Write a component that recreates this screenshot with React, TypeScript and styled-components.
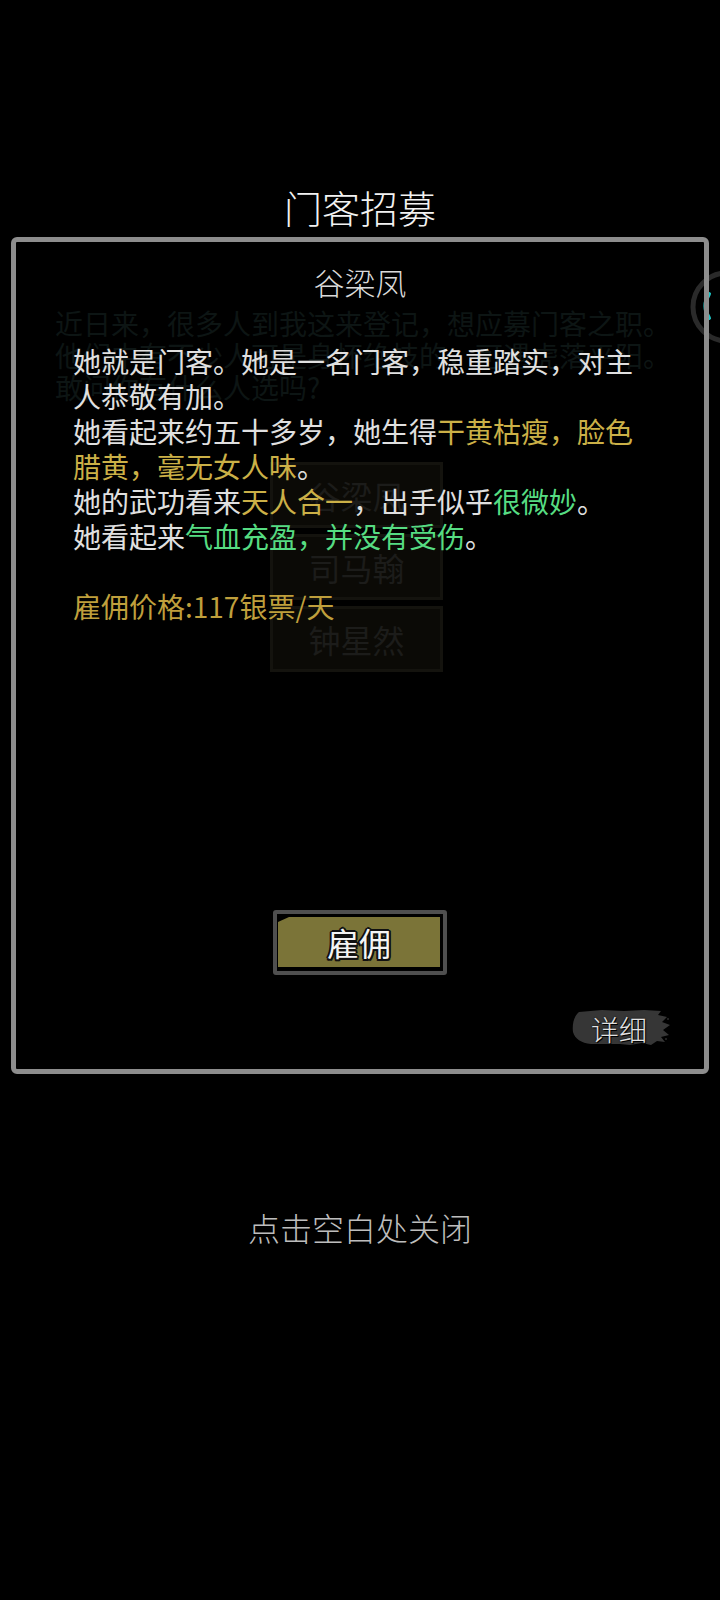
import React from 'react';
import styled, { createGlobalStyle } from 'styled-components';

const GlobalStyle = createGlobalStyle`
  html, body {
    margin: 0;
    padding: 0;
    background: #000;
  }
  body {
    font-family: "Noto Sans CJK SC", "Noto Sans", sans-serif;
  }
`;

const Screen = styled.div`
  position: relative;
  width: 720px;
  height: 1600px;
  overflow: hidden;
  background: #000;
`;

// page under the dialog, dimmed almost to black
const UnderPage = styled.div`
  display: flex;
  flex-direction: column;
  padding-top: 307px;
`;

const Intro = styled.p`
  margin: 0 0 0 55px;
  width: 620px;
  font-size: 28px;
  line-height: 32px;
  color: #0d1514;
`;

const NameList = styled.div`
  display: flex;
  flex-direction: column;
  align-items: center;
  gap: 6px;
  margin-top: 59px;
  padding-right: 7px;
`;

const NameButton = styled.div`
  box-sizing: border-box;
  width: 173px;
  height: 66px;
  border: 3px solid #14130e;
  background: #0b0a06;
  display: flex;
  align-items: center;
  justify-content: center;
  font-size: 32px;
  color: #1c1c1a;
`;

const FloatBall = styled.svg`
  position: absolute;
  left: 684px;
  top: 264px;
`;

const Overlay = styled.div`
  position: absolute;
  inset: 0;
  display: flex;
  flex-direction: column;
  align-items: center;
  padding-top: 184px;
`;

const Title = styled.h1`
  margin: 0;
  font-size: 38px;
  line-height: 46px;
  font-weight: 300;
  color: #f2f2f2;
`;

const Panel = styled.section`
  box-sizing: border-box;
  margin-top: 7px;
  width: 698px;
  height: 837px;
  border: 5px solid #8d8d8d;
  border-radius: 6px;
  display: flex;
  flex-direction: column;
  align-items: center;
  padding-top: 20px;
`;

const Name = styled.h2`
  margin: 0;
  font-size: 31px;
  line-height: 40px;
  font-weight: 300;
  color: #dadada;
`;

const Body = styled.div`
  align-self: flex-start;
  margin: 42px 0 0 57px;
  width: 574px;
  font-size: 28px;
  line-height: 35px;
  color: #e0e0e0;
`;

const Para = styled.p`
  margin: 0;
  min-height: 35px;
`;

const Tone = styled.span<{ $tone: 'gold' | 'green' | 'price' }>`
  color: ${p => (p.$tone === 'green' ? '#56dc82' : p.$tone === 'price' ? '#bf9f3c' : '#cbb047')};
`;

const HireButton = styled.button`
  box-sizing: border-box;
  margin-top: 286px;
  width: 174px;
  height: 65px;
  padding: 3px 3px 4px 1px;
  border: 4px solid #4f4f4f;
  border-radius: 3px;
  background: #000;
  display: flex;
  cursor: pointer;
`;

const HireFace = styled.span`
  flex: 1;
  display: flex;
  align-items: center;
  justify-content: center;
  background: #7b7438;
  clip-path: polygon(11px 0, 100% 0, 100% 100%, 0 100%, 0 5px);
  font-family: "Noto Sans CJK SC", sans-serif;
  font-size: 32px;
  font-weight: 400;
  color: #f4f4f4;
  text-shadow:
    2px 0 0 #111, -2px 0 0 #111, 0 2px 0 #111, 0 -2px 0 #111,
    1.5px 1.5px 0 #111, -1.5px 1.5px 0 #111, 1.5px -1.5px 0 #111, -1.5px -1.5px 0 #111;
`;

const DetailButton = styled.div`
  align-self: flex-end;
  margin: 34px 34px 0 0;
  width: 98px;
  height: 36px;
  display: grid;
  & > * {
    grid-area: 1 / 1;
  }
`;

const DetailLabel = styled.span`
  display: flex;
  align-items: center;
  justify-content: center;
  padding-right: 4px;
  font-size: 28px;
  font-weight: 300;
  color: #e2e2e2;
  text-shadow: 0 0 2px #000, 1px 1px 0 #000;
`;

const CloseHint = styled.p`
  margin: 133px 0 0;
  font-size: 32px;
  line-height: 40px;
  font-weight: 300;
  color: #bdbdbd;
`;

const BrushStroke: React.FC = () => (
  <svg width="98" height="36" viewBox="0 0 98 36">
    <path
      d="M7,3 C2,7 0,15 1,23 C3,30 9,34 19,35 L48,35 L58,36 L70,34 L79,36 L85,32 L93,33 L89,28 L97,26 L91,21 L98,16 L90,13 L95,8 L86,6 L89,2 L72,1 L52,2 L30,1 Z"
      fill="#363636"
    />
    <circle cx="94" cy="30" r="1" fill="#2c2c2c" />
    <circle cx="96" cy="10" r="1" fill="#2c2c2c" />
  </svg>
);

const App: React.FC = () => {
  return (
    <>
      <GlobalStyle />
      <Screen>
        <UnderPage>
          <Intro>
            近日来，很多人到我这来登记，想应募门客之职。他们中有不少人可是身怀绝技的，可遇虎落平阳。敢问你有什么人选吗?
          </Intro>
          <NameList>
            <NameButton>谷梁凤</NameButton>
            <NameButton>司马翰</NameButton>
            <NameButton>钟星然</NameButton>
          </NameList>
        </UnderPage>
        <FloatBall width="84" height="84" viewBox="0 0 84 84">
          <circle cx="43" cy="43" r="34" fill="none" stroke="#2a2a2a" strokeWidth="5" />
          <path d="M25,30 A22,22 0 0 0 25,54" fill="none" stroke="#1ec8c8" strokeWidth="4" strokeLinecap="round" />
        </FloatBall>

        <Overlay>
          <Title>门客招募</Title>
          <Panel>
            <Name>谷梁凤</Name>
            <Body>
              <Para>她就是门客。她是一名门客，稳重踏实，对主人恭敬有加。</Para>
              <Para>
                她看起来约五十多岁，她生得<Tone $tone="gold">干黄枯瘦，脸色腊黄，毫无女人味</Tone>。
              </Para>
              <Para>
                她的武功看来<Tone $tone="gold">天人合一</Tone>，出手似乎<Tone $tone="green">很微妙</Tone>。
              </Para>
              <Para>
                她看起来<Tone $tone="green">气血充盈，并没有受伤</Tone>。
              </Para>
              <Para />
              <Para>
                <Tone $tone="price">雇佣价格:117银票/天</Tone>
              </Para>
            </Body>
            <HireButton>
              <HireFace>雇佣</HireFace>
            </HireButton>
            <DetailButton>
              <BrushStroke />
              <DetailLabel>详细</DetailLabel>
            </DetailButton>
          </Panel>
          <CloseHint>点击空白处关闭</CloseHint>
        </Overlay>
      </Screen>
    </>
  );
};

export default App;
